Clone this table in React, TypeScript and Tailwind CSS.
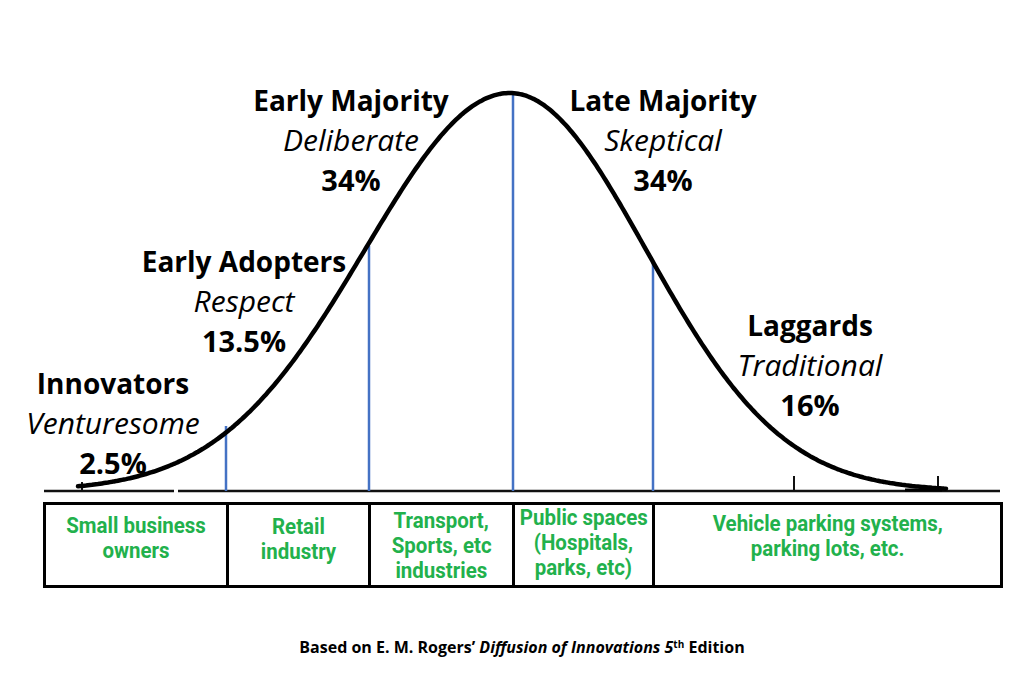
const BASE = 491;
const PEAK = 93;

const curvePath = (() => {
  const pts: string[] = [];
  for (let x = 78; x <= 946; x += 2) {
    const dx = x - 510;
    const s = dx < 0 ? 145 : 136;
    let y = BASE - (BASE - PEAK) * Math.exp(-0.5 * (dx / s) * (dx / s));
    if (y > BASE - 1) y = BASE - 1;
    pts.push(`${x},${y.toFixed(1)}`);
  }
  return "M" + pts.join(" L");
})();

const dividers = [
  { x: 226, top: 426 },
  { x: 369, top: 246 },
  { x: 513, top: 93 },
  { x: 653, top: 262 },
];

type LabelProps = {
  x: number;
  top: number;
  title: string;
  trait: string;
  pct: string;
};

const labels: LabelProps[] = [
  { x: 113, top: 363, title: "Innovators", trait: "Venturesome", pct: "2.5%" },
  { x: 244, top: 241, title: "Early Adopters", trait: "Respect", pct: "13.5%" },
  { x: 351, top: 80, title: "Early Majority", trait: "Deliberate", pct: "34%" },
  { x: 663, top: 80, title: "Late Majority", trait: "Skeptical", pct: "34%" },
  { x: 810, top: 305, title: "Laggards", trait: "Traditional", pct: "16%" },
];

function Label({ x, top, title, trait, pct }: LabelProps) {
  return (
    <div
      className="absolute -translate-x-1/2 whitespace-nowrap text-center leading-[40px] text-black"
      style={{ left: x, top }}
    >
      <div className="text-[28px] font-bold">{title}</div>
      <div className="text-[30px] italic">{trait}</div>
      <div className="text-[29px] font-bold">{pct}</div>
    </div>
  );
}

const cells = [
  { lines: ["Small business", "owners"], pad: "pt-[8px]" },
  { lines: ["Retail", "industry"], pad: "pt-[9px]" },
  { lines: ["Transport,", "Sports, etc", "industries"], pad: "pt-[3px]" },
  { lines: ["Public spaces", "(Hospitals,", "parks, etc)"], pad: "pt-0" },
  { lines: ["Vehicle parking systems,", "parking lots, etc."], pad: "pt-[6px]" },
];

export default function App() {
  return (
    <div className="flex h-[681px] w-[1024px] flex-col overflow-hidden bg-white font-['Open_Sans',sans-serif]">
      <div className="relative h-[496px] w-full">
        <svg className="absolute inset-0" width={1024} height={496} viewBox="0 0 1024 496">
          <path d="M44 491 H174 M178 491 H1000" stroke="#111" strokeWidth={2.5} fill="none" />
          <path d="M82 482 V491 M794 476 V491 M938 476 V491" stroke="#111" strokeWidth={2} fill="none" />
          {dividers.map((d) => (
            <line key={d.x} x1={d.x} x2={d.x} y1={d.top} y2={BASE} stroke="#4472c4" strokeWidth={2.5} />
          ))}
          <path d={curvePath} stroke="#000" strokeWidth={4.5} fill="none" strokeLinecap="round" />
          <path d="M905 490 H942" stroke="#000" strokeWidth={3} />
        </svg>
        {labels.map((l) => (
          <Label key={l.title} {...l} />
        ))}
      </div>

      <div className="ml-[43px] mt-[6px] grid h-[86px] w-[960px] grid-cols-[180px_142px_144px_140px_1fr] border-[3px] border-black">
        {cells.map((c, i) => (
          <div
            key={i}
            className={`${i > 0 ? "border-l-[3px] border-black" : ""} ${c.pad} overflow-hidden whitespace-nowrap text-center font-[Roboto,sans-serif] text-[22px] font-bold leading-[25px] text-[#22b14c]`}
          >
            {c.lines.map((t) => (
              <div key={t}>
                <span className="inline-block origin-center scale-x-[0.93]">{t}</span>
              </div>
            ))}
          </div>
        ))}
      </div>

      <p className="mt-[49px] pl-[20px] text-center text-[16px] font-bold leading-[20px] text-black">
        Based on E. M. Rogers’ <span className="italic">Diffusion of Innovations 5</span>
        <sup className="text-[10px]">th</sup> Edition
      </p>
    </div>
  );
}
